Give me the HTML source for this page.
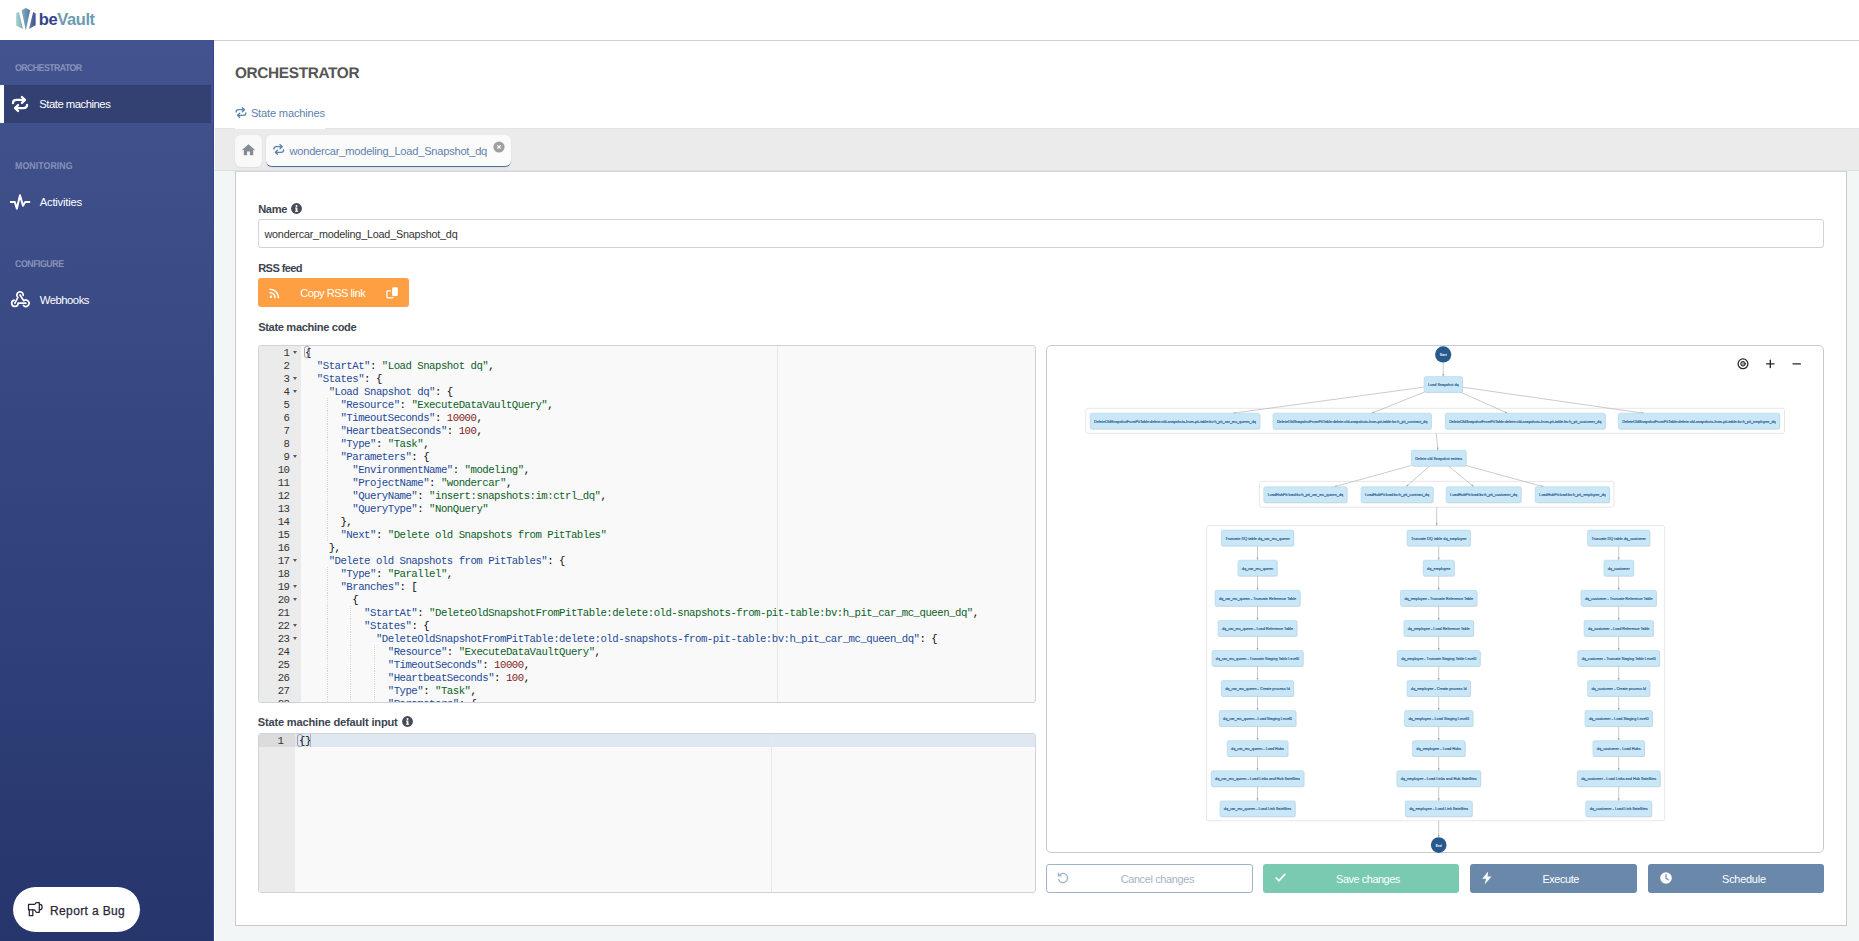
<!DOCTYPE html>
<html lang="en">
<head>
<meta charset="utf-8">
<title>beVault - Orchestrator</title>
<style>
*{box-sizing:border-box;margin:0;padding:0}
html,body{width:1859px;height:941px;overflow:hidden;background:#f3f6f7}
body{position:relative;font-family:"Liberation Sans",sans-serif;font-size:11.3px;color:#333;-webkit-font-smoothing:antialiased}
.abs{position:absolute}
.t{position:absolute;white-space:pre;line-height:1}
#topbar{left:0;top:0;width:1859px;height:41px;background:#fff;border-bottom:1px solid #d2d2d2}
#sidebar{left:0;top:40px;width:214px;height:901px;border-right:1px solid #34488b;background:linear-gradient(180deg,#42538f 0%,#26366c 100%)}
.sec{color:#8d98bd;font-weight:700;font-size:10px}
.nav{color:#fff}
#active{left:0;top:45px;width:211px;height:38px;background:#324072;border-left:4px solid #fff}
#whitehead{left:214px;top:41px;width:1645px;height:87px;background:#fff}
#tabbar{left:214px;top:128px;width:1645px;height:43px;background:#ebebeb;border-top:1px solid #e1e4e8;border-bottom:1px solid #dcdfe3}
#card{left:235px;top:171px;width:1612px;height:755px;background:#fff;border:1px solid #c9c9c9;border-top:1px solid #d6d6d6}
.lbl{font-weight:700;color:#343a40}
.btn{position:absolute;border-radius:3px;height:29px;top:864px}
.btn .t{color:#fff}
.ed{position:absolute;background:#f9f9f9;border:1px solid #cfd4da;border-radius:3px;overflow:hidden;font-family:"Liberation Mono",monospace;font-size:10.7px;letter-spacing:-0.505px;color:#080808}
.ed .gut{position:absolute;left:0;top:0;bottom:0;background:#ebebeb}
.ed .pm{position:absolute;top:0;bottom:0;width:1px;background:#e8e8e8}
.ln{position:absolute;left:0;height:13px;line-height:13px;text-align:right;color:#333;white-space:pre}
.cl{position:absolute;height:13px;line-height:13px;white-space:pre}
.k{color:#234a97}.s{color:#0b6125}.n{color:#811f24}
.ig{position:absolute;width:1px;height:13px;background:repeating-linear-gradient(180deg,#e0d9ca 0 1px,transparent 1px 2px)}
.fa{position:absolute;width:0;height:0;border-left:2.2px solid transparent;border-right:2.2px solid transparent;border-top:3px solid #5a5a5a}
</style>
</head>
<body>

<div id="topbar" class="abs"></div>
<svg class="abs" style="left:15px;top:7px" width="23" height="25" viewBox="0 0 23 25">
<defs><linearGradient id="lg" gradientUnits="userSpaceOnUse" x1="1" y1="0" x2="21" y2="0"><stop offset="0" stop-color="#a6d8cb"/><stop offset="0.5" stop-color="#6a93b2"/><stop offset="1" stop-color="#3b4f92"/></linearGradient></defs>
<path d="M1.1 6.2 L4.0 4.9 L7.9 22.0 L1.1 18.5 Z" fill="url(#lg)"/>
<path d="M6.6 3.3 L10.8 1.1 L15.2 3.3 L10.8 23.3 Z" fill="url(#lg)"/>
<path d="M18.2 4.9 L20.6 6.6 L20.6 18.2 L14.0 22.0 Z" fill="url(#lg)"/>
</svg>
<div id="sidebar" class="abs">
 <div id="active" class="abs"></div>
</div>
<div id="whitehead" class="abs"></div>
<div id="tabbar" class="abs"></div>
<div class="abs" style="left:214px;top:41px;width:1px;height:900px;background:rgba(255,255,255,.75)"></div>
<div class="abs" style="left:235px;top:127px;width:90px;height:2px;background:#fff"></div>
<div id="card" class="abs"></div>
<!-- sidebar icons -->
<svg class="abs" style="left:12px;top:96px" width="16" height="16" viewBox="0 0 16 16" overflow="visible" fill="none" stroke="#fff" stroke-width="2.25" stroke-linecap="round" stroke-linejoin="round">
<path d="M0.9 7.2 C0.9 5 2.4 3.9 4.6 3.9 H12.6 M9.9 0.95 L13 3.9 L9.9 6.85"/>
<path d="M15.1 8.8 C15.1 11 13.6 12.1 11.4 12.1 H3.4 M6.1 9.15 L3 12.1 L6.1 15.05"/>
</svg>
<svg class="abs" style="left:10px;top:193px" width="21" height="18" viewBox="0 0 21 18" fill="none" stroke="#fff" stroke-width="2" stroke-linecap="butt" stroke-linejoin="round">
<path d="M-0.2 9 H4.8 L6.9 15.6 L10 2.2 L13 12.7 L15.2 9 H20.2"/>
</svg>
<svg class="abs" style="left:9px;top:289px" width="22" height="20" viewBox="9 289 22 20" fill="none" stroke="#fff" stroke-width="1.7" stroke-linecap="round" stroke-linejoin="round">
<path d="M23.19 295.28 A3.2 3.2 0 1 0 17.82 297.34 L14.9 303.2"/>
<path d="M14.07 300.11 A3.2 3.2 0 1 0 18.1 303.2 H25.8"/>
<path d="M20 295 L23.7 300.78 A3.2 3.2 0 1 1 23.46 305.38"/>
</svg>
<!-- report a bug -->
<div class="abs" style="left:13px;top:887px;width:127px;height:45px;border-radius:23px;background:#fff"></div>
<svg class="abs" style="left:27px;top:901px" width="16" height="16" viewBox="0 0 16 16" fill="none" stroke="#2b2536" stroke-width="1.25" stroke-linejoin="round" stroke-linecap="round">
<path d="M1.5 3.4 H7.4 C8.2 3.4 8.6 1.5 9.6 1.5 H12.3 V11.3 H9.6 C8.6 11.3 8.2 8.9 7.4 8.9 H1.5 Z"/><path d="M2.3 8.9 V14.7 H5.8 V8.9"/><path d="M12.9 3.3 A2.2 2.75 0 0 1 12.9 8.8"/>
</svg>
<!-- breadcrumb icon -->
<svg class="abs" style="left:234.8px;top:106.9px" width="12" height="11" viewBox="0 0 16 16" fill="none" stroke="#5b82ae" stroke-width="2" stroke-linecap="round" stroke-linejoin="round">
<path d="M0.9 7.2 C0.9 5 2.4 3.9 4.6 3.9 H12.6 M9.9 0.95 L13 3.9 L9.9 6.85"/>
<path d="M15.1 8.8 C15.1 11 13.6 12.1 11.4 12.1 H3.4 M6.1 9.15 L3 12.1 L6.1 15.05"/>
</svg>
<!-- tabs -->
<div class="abs" style="left:235px;top:135px;width:27px;height:32px;border-radius:6px;background:#f9f9f9;box-shadow:0 1px 2px rgba(0,0,0,.07)"></div>
<svg class="abs" style="left:241.9px;top:144px" width="13" height="11.5" viewBox="0 0 13 11.5"><path d="M6.5 0.3 L12.8 5.7 L12.1 6.5 L11.2 5.8 V11.2 H7.9 V7.4 H5.1 V11.2 H1.8 V5.8 L0.9 6.5 L0.2 5.7 Z" fill="#838b94"/></svg>
<div class="abs" style="left:266px;top:135px;width:245px;height:32px;border-radius:6px;background:#fbfbfb;border-bottom:1.5px solid #4c6e9e;box-shadow:0 1px 2px rgba(0,0,0,.08)"></div>
<svg class="abs" style="left:273.3px;top:144px" width="11.5" height="11" viewBox="0 0 16 16" fill="none" stroke="#5b82ae" stroke-width="2" stroke-linecap="round" stroke-linejoin="round">
<path d="M0.9 7.2 C0.9 5 2.4 3.9 4.6 3.9 H12.6 M9.9 0.95 L13 3.9 L9.9 6.85"/>
<path d="M15.1 8.8 C15.1 11 13.6 12.1 11.4 12.1 H3.4 M6.1 9.15 L3 12.1 L6.1 15.05"/>
</svg>
<svg class="abs" style="left:493px;top:140.7px" width="12" height="12" viewBox="0 0 12 12"><circle cx="6" cy="6" r="5.6" fill="#a0a0a0"/><path d="M4.3 4.3 L7.7 7.7 M7.7 4.3 L4.3 7.7" stroke="#fff" stroke-width="1.15" stroke-linecap="butt"/></svg>

<!-- info icons -->
<svg class="abs" style="left:291px;top:203px" width="11" height="11" viewBox="0 0 11 11"><circle cx="5.5" cy="5.5" r="5.4" fill="#454c55"/><rect x="4.7" y="4.6" width="1.7" height="3.8" fill="#fff"/><rect x="4.1" y="4.6" width="1.4" height="1" fill="#fff"/><rect x="4" y="7.7" width="3.1" height="1" fill="#fff"/><circle cx="5.5" cy="2.9" r="1" fill="#fff"/></svg>
<svg class="abs" style="left:401.5px;top:716.3px" width="11" height="11" viewBox="0 0 11 11"><circle cx="5.5" cy="5.5" r="5.4" fill="#454c55"/><rect x="4.7" y="4.6" width="1.7" height="3.8" fill="#fff"/><rect x="4.1" y="4.6" width="1.4" height="1" fill="#fff"/><rect x="4" y="7.7" width="3.1" height="1" fill="#fff"/><circle cx="5.5" cy="2.9" r="1" fill="#fff"/></svg>
<!-- name input -->
<div class="abs" style="left:258px;top:219px;width:1566px;height:29px;border:1px solid #ced4da;border-radius:3px;background:#fff"></div>
<!-- rss button -->
<div class="abs" style="left:258px;top:278px;width:151px;height:29px;border-radius:3px;background:#ff9f43"></div>
<svg class="abs" style="left:268.8px;top:288.1px" width="10.9" height="10.9" viewBox="0 0 12 12" fill="none" stroke="#fff" stroke-width="1.8" stroke-linecap="round"><circle cx="2.2" cy="9.7" r="1.4" fill="#fff" stroke="none"/><path d="M1.2 5.2 A5.4 5.4 0 0 1 6.6 10.6"/><path d="M1.2 1.4 A9.2 9.2 0 0 1 10.4 10.6"/></svg>
<svg class="abs" style="left:386px;top:287px" width="13" height="12" viewBox="0 0 13 12"><rect x="6.1" y="0.3" width="5.7" height="8.7" rx="1.3" fill="#fff"/><path d="M5 3.9 H1.7 Q0.9 3.9 0.9 4.7 V10.1 Q0.9 10.9 1.7 10.9 H6.4 Q7.2 10.9 7.2 10.1 V9.7" fill="none" stroke="#fff" stroke-width="1.25"/></svg>
<!-- bottom buttons -->
<div class="btn" style="left:1046px;width:207px;background:#fff;border:1px solid #9fb4cb"></div>
<svg class="abs" style="left:1057px;top:871.5px" width="12" height="12" viewBox="0 0 12 12" fill="none" stroke="#9db0c6" stroke-width="1.25" stroke-linecap="round" stroke-linejoin="round"><path d="M2.2 3.4 A4.6 4.6 0 1 1 1.6 7.4"/><path d="M1.4 1 V3.8 H4.2"/></svg>
<div class="btn" style="left:1263px;width:196px;background:#79cab0"></div>
<svg class="abs" style="left:1274.5px;top:873px" width="11" height="9.5" viewBox="0 0 11 9.5" fill="none" stroke="#fff" stroke-width="1.7" stroke-linecap="round" stroke-linejoin="round"><path d="M1.2 5 L4 7.8 L9.8 1.4"/></svg>
<div class="btn" style="left:1470px;width:167px;background:#6a89aa"></div>
<svg class="abs" style="left:1480.8px;top:871.2px" width="12" height="13.8" viewBox="0 0 11 13"><path d="M6.6 0.4 L1 7.2 H4.6 L3.4 12.6 L9.8 5.2 H6 Z" fill="#fff"/></svg>
<div class="btn" style="left:1648px;width:176px;background:#6a89aa"></div>
<svg class="abs" style="left:1659.5px;top:872px" width="12" height="12" viewBox="0 0 12 12"><circle cx="6" cy="6" r="5.8" fill="#fff"/><path d="M6 2.6 V6.2 L8.2 7.8" fill="none" stroke="#6a89aa" stroke-width="1.2" stroke-linecap="round"/></svg>
<!-- graph panel -->
<div class="abs" style="left:1046px;top:345px;width:778px;height:508px;border:1px solid #cbcbcb;border-radius:5px;background:#fff"></div>

<div id="t_sec1" class="t" style="left:14.67px;top:63.00px;font-size:9.8px;font-weight:700;color:#8792ba;letter-spacing:-0.650px;transform:scale(0.9,1) rotate(0.03deg);transform-origin:0 0;">ORCHESTRATOR</div>
<div id="t_nav1" class="t" style="left:39.22px;top:99.00px;font-size:11.3px;font-weight:400;color:#fff;letter-spacing:-0.483px;">State machines</div>
<div id="t_sec2" class="t" style="left:14.53px;top:161.00px;font-size:9.8px;font-weight:700;color:#8792ba;letter-spacing:0.056px;transform:scale(0.9,1) rotate(0.03deg);transform-origin:0 0;">MONITORING</div>
<div id="t_nav2" class="t" style="left:39.68px;top:197.00px;font-size:11.3px;font-weight:400;color:#fff;letter-spacing:-0.236px;">Activities</div>
<div id="t_sec3" class="t" style="left:14.71px;top:259.00px;font-size:9.8px;font-weight:700;color:#8792ba;letter-spacing:-0.539px;transform:scale(0.9,1) rotate(0.03deg);transform-origin:0 0;">CONFIGURE</div>
<div id="t_nav3" class="t" style="left:39.76px;top:295.00px;font-size:11.3px;font-weight:400;color:#fff;letter-spacing:-0.496px;">Webhooks</div>
<div id="t_bug" class="t" style="left:50.06px;top:905.00px;font-size:12px;font-weight:400;color:#2b2536;letter-spacing:0.363px;-webkit-text-stroke:0.25px #2b2536;">Report a Bug</div>
<div id="t_title" class="t" style="left:235.20px;top:65.00px;font-size:15.4px;font-weight:700;color:#555;letter-spacing:-0.366px;transform:rotate(0.03deg);transform-origin:0 0;">ORCHESTRATOR</div>
<div id="t_crumb" class="t" style="left:250.90px;top:108.00px;font-size:11.1px;font-weight:400;color:#5b82ae;letter-spacing:-0.168px;">State machines</div>
<div id="t_tab" class="t" style="left:289.49px;top:146.00px;font-size:11.1px;font-weight:400;color:#5b82ae;letter-spacing:-0.223px;">wondercar_modeling_Load_Snapshot_dq</div>
<div id="t_name" class="t" style="left:258.19px;top:204.00px;font-size:11.1px;font-weight:700;color:#3d4550;letter-spacing:-0.359px;">Name</div>
<div id="t_inp" class="t" style="left:264.45px;top:229.00px;font-size:10.8px;font-weight:400;color:#333;letter-spacing:-0.196px;">wondercar_modeling_Load_Snapshot_dq</div>
<div id="t_rss" class="t" style="left:258.19px;top:263.00px;font-size:11.1px;font-weight:700;color:#3d4550;letter-spacing:-0.607px;">RSS feed</div>
<div id="t_copy" class="t" style="left:300.22px;top:288.00px;font-size:11.1px;font-weight:400;color:#fff;letter-spacing:-0.499px;">Copy RSS link</div>
<div id="t_smc" class="t" style="left:258.15px;top:322.00px;font-size:11.1px;font-weight:700;color:#3d4550;letter-spacing:-0.332px;">State machine code</div>
<div id="t_smd" class="t" style="left:257.78px;top:717.00px;font-size:11.1px;font-weight:700;color:#3d4550;letter-spacing:-0.187px;">State machine default input</div>
<div id="t_cancel" class="t" style="left:1120.64px;top:874.00px;font-size:10.9px;font-weight:400;color:#a3b4c8;letter-spacing:-0.333px;">Cancel changes</div>
<div id="t_save" class="t" style="left:1336.07px;top:874.00px;font-size:10.9px;font-weight:400;color:#fff;letter-spacing:-0.434px;">Save changes</div>
<div id="t_exec" class="t" style="left:1542.44px;top:874.00px;font-size:10.9px;font-weight:400;color:#fff;letter-spacing:-0.400px;">Execute</div>
<div id="t_sched" class="t" style="left:1722.11px;top:874.00px;font-size:10.9px;font-weight:400;color:#fff;letter-spacing:-0.223px;">Schedule</div>
<div id="t_logo" class="t" style="left:38.78px;top:11.00px;font-size:16.5px;font-weight:700;color:#6d9bb0;letter-spacing:-0.394px;"><span style="color:#2f4389">be</span>Vault</div>
<div id="ed1" class="ed" style="left:258px;top:345px;width:778px;height:358px">
<div class="gut" style="width:42px"></div>
<div class="pm" style="left:518.2px"></div>
<div class="ln" style="top:0.9px;width:30.5px">1</div>
<div class="fa" style="left:33.8px;top:4.8px"></div>
<div class="cl" style="left:46px;top:0.9px">{</div>
<div class="ln" style="top:13.9px;width:30.5px">2</div>
<div class="cl" style="left:46px;top:13.9px">  <span class="k">"StartAt"</span>: <span class="s">"Load Snapshot dq"</span>,</div>
<div class="ln" style="top:26.9px;width:30.5px">3</div>
<div class="fa" style="left:33.8px;top:30.8px"></div>
<div class="cl" style="left:46px;top:26.9px">  <span class="k">"States"</span>: {</div>
<div class="ln" style="top:39.9px;width:30.5px">4</div>
<div class="fa" style="left:33.8px;top:43.8px"></div>
<div class="cl" style="left:46px;top:39.9px">    <span class="k">"Load Snapshot dq"</span>: {</div>
<div class="ln" style="top:52.9px;width:30.5px">5</div>
<div class="ig" style="left:67.5px;top:52px"></div>
<div class="cl" style="left:46px;top:52.9px">      <span class="k">"Resource"</span>: <span class="s">"ExecuteDataVaultQuery"</span>,</div>
<div class="ln" style="top:65.9px;width:30.5px">6</div>
<div class="ig" style="left:67.5px;top:65px"></div>
<div class="cl" style="left:46px;top:65.9px">      <span class="k">"TimeoutSeconds"</span>: <span class="n">10000</span>,</div>
<div class="ln" style="top:78.9px;width:30.5px">7</div>
<div class="ig" style="left:67.5px;top:78px"></div>
<div class="cl" style="left:46px;top:78.9px">      <span class="k">"HeartbeatSeconds"</span>: <span class="n">100</span>,</div>
<div class="ln" style="top:91.9px;width:30.5px">8</div>
<div class="ig" style="left:67.5px;top:91px"></div>
<div class="cl" style="left:46px;top:91.9px">      <span class="k">"Type"</span>: <span class="s">"Task"</span>,</div>
<div class="ln" style="top:104.9px;width:30.5px">9</div>
<div class="fa" style="left:33.8px;top:108.8px"></div>
<div class="ig" style="left:67.5px;top:104px"></div>
<div class="cl" style="left:46px;top:104.9px">      <span class="k">"Parameters"</span>: {</div>
<div class="ln" style="top:117.9px;width:30.5px">10</div>
<div class="ig" style="left:67.5px;top:117px"></div>
<div class="cl" style="left:46px;top:117.9px">        <span class="k">"EnvironmentName"</span>: <span class="s">"modeling"</span>,</div>
<div class="ln" style="top:130.9px;width:30.5px">11</div>
<div class="ig" style="left:67.5px;top:130px"></div>
<div class="cl" style="left:46px;top:130.9px">        <span class="k">"ProjectName"</span>: <span class="s">"wondercar"</span>,</div>
<div class="ln" style="top:143.9px;width:30.5px">12</div>
<div class="ig" style="left:67.5px;top:143px"></div>
<div class="cl" style="left:46px;top:143.9px">        <span class="k">"QueryName"</span>: <span class="s">"insert:snapshots:im:ctrl_dq"</span>,</div>
<div class="ln" style="top:156.9px;width:30.5px">13</div>
<div class="ig" style="left:67.5px;top:156px"></div>
<div class="cl" style="left:46px;top:156.9px">        <span class="k">"QueryType"</span>: <span class="s">"NonQuery"</span></div>
<div class="ln" style="top:169.9px;width:30.5px">14</div>
<div class="ig" style="left:67.5px;top:169px"></div>
<div class="cl" style="left:46px;top:169.9px">      },</div>
<div class="ln" style="top:182.9px;width:30.5px">15</div>
<div class="ig" style="left:67.5px;top:182px"></div>
<div class="cl" style="left:46px;top:182.9px">      <span class="k">"Next"</span>: <span class="s">"Delete old Snapshots from PitTables"</span></div>
<div class="ln" style="top:195.9px;width:30.5px">16</div>
<div class="cl" style="left:46px;top:195.9px">    },</div>
<div class="ln" style="top:208.9px;width:30.5px">17</div>
<div class="fa" style="left:33.8px;top:212.8px"></div>
<div class="cl" style="left:46px;top:208.9px">    <span class="k">"Delete old Snapshots from PitTables"</span>: {</div>
<div class="ln" style="top:221.9px;width:30.5px">18</div>
<div class="ig" style="left:67.5px;top:221px"></div>
<div class="cl" style="left:46px;top:221.9px">      <span class="k">"Type"</span>: <span class="s">"Parallel"</span>,</div>
<div class="ln" style="top:234.9px;width:30.5px">19</div>
<div class="fa" style="left:33.8px;top:238.8px"></div>
<div class="ig" style="left:67.5px;top:234px"></div>
<div class="cl" style="left:46px;top:234.9px">      <span class="k">"Branches"</span>: [</div>
<div class="ln" style="top:247.9px;width:30.5px">20</div>
<div class="fa" style="left:33.8px;top:251.8px"></div>
<div class="ig" style="left:67.5px;top:247px"></div>
<div class="cl" style="left:46px;top:247.9px">        {</div>
<div class="ln" style="top:260.9px;width:30.5px">21</div>
<div class="ig" style="left:67.5px;top:260px"></div>
<div class="ig" style="left:91.1px;top:260px"></div>
<div class="cl" style="left:46px;top:260.9px">          <span class="k">"StartAt"</span>: <span class="s">"DeleteOldSnapshotFromPitTable:delete:old-snapshots-from-pit-table:bv:h_pit_car_mc_queen_dq"</span>,</div>
<div class="ln" style="top:273.9px;width:30.5px">22</div>
<div class="fa" style="left:33.8px;top:277.8px"></div>
<div class="ig" style="left:67.5px;top:273px"></div>
<div class="ig" style="left:91.1px;top:273px"></div>
<div class="cl" style="left:46px;top:273.9px">          <span class="k">"States"</span>: {</div>
<div class="ln" style="top:286.9px;width:30.5px">23</div>
<div class="fa" style="left:33.8px;top:290.8px"></div>
<div class="ig" style="left:67.5px;top:286px"></div>
<div class="ig" style="left:91.1px;top:286px"></div>
<div class="cl" style="left:46px;top:286.9px">            <span class="k">"DeleteOldSnapshotFromPitTable:delete:old-snapshots-from-pit-table:bv:h_pit_car_mc_queen_dq"</span>: {</div>
<div class="ln" style="top:299.9px;width:30.5px">24</div>
<div class="ig" style="left:67.5px;top:299px"></div>
<div class="ig" style="left:91.1px;top:299px"></div>
<div class="ig" style="left:114.8px;top:299px"></div>
<div class="cl" style="left:46px;top:299.9px">              <span class="k">"Resource"</span>: <span class="s">"ExecuteDataVaultQuery"</span>,</div>
<div class="ln" style="top:312.9px;width:30.5px">25</div>
<div class="ig" style="left:67.5px;top:312px"></div>
<div class="ig" style="left:91.1px;top:312px"></div>
<div class="ig" style="left:114.8px;top:312px"></div>
<div class="cl" style="left:46px;top:312.9px">              <span class="k">"TimeoutSeconds"</span>: <span class="n">10000</span>,</div>
<div class="ln" style="top:325.9px;width:30.5px">26</div>
<div class="ig" style="left:67.5px;top:325px"></div>
<div class="ig" style="left:91.1px;top:325px"></div>
<div class="ig" style="left:114.8px;top:325px"></div>
<div class="cl" style="left:46px;top:325.9px">              <span class="k">"HeartbeatSeconds"</span>: <span class="n">100</span>,</div>
<div class="ln" style="top:338.9px;width:30.5px">27</div>
<div class="ig" style="left:67.5px;top:338px"></div>
<div class="ig" style="left:91.1px;top:338px"></div>
<div class="ig" style="left:114.8px;top:338px"></div>
<div class="cl" style="left:46px;top:338.9px">              <span class="k">"Type"</span>: <span class="s">"Task"</span>,</div>
<div class="ln" style="top:351.9px;width:30.5px">28</div>
<div class="fa" style="left:33.8px;top:355.8px"></div>
<div class="ig" style="left:67.5px;top:351px"></div>
<div class="ig" style="left:91.1px;top:351px"></div>
<div class="ig" style="left:114.8px;top:351px"></div>
<div class="cl" style="left:46px;top:351.9px">              <span class="k">"Parameters"</span>: {</div>
</div>
<div id="ed2" class="ed" style="left:258px;top:733px;width:778px;height:160px">
<div class="abs" style="left:0;top:0px;width:100%;height:13px;background:#dfe7f1"></div>
<div class="gut" style="width:36px"></div>
<div class="abs" style="left:0;top:0px;width:36px;height:13px;background:#dcdcdc"></div>
<div class="pm" style="left:512.2px"></div>
<div class="ln" style="top:0.9px;width:24.5px">1</div>
<div class="cl" style="left:40px;top:0.9px">{}</div>
</div>
<div class="abs" style="left:304px;top:345.5px;width:6.3px;height:12.6px;border:1px solid rgba(75,75,126,.5);border-radius:2.5px"></div>
<div class="abs" style="left:297px;top:733.6px;width:6.3px;height:13.2px;border:1px solid rgba(75,75,126,.5);border-radius:2.5px"></div>
<div class="abs" style="left:310px;top:734px;width:1.4px;height:13px;background:#aab2bf"></div>
<svg class="abs" style="left:1047px;top:346px" width="776" height="508" viewBox="1047 346 776 508" font-family="Liberation Sans, sans-serif">
<rect x="1085.8" y="408.3" width="698.7" height="25.1" rx="2.2" fill="#fff" stroke="#e4e4e4" stroke-width="0.9"/>
<rect x="1259.4" y="481.4" width="354.6" height="25.8" rx="2.2" fill="#fff" stroke="#e4e4e4" stroke-width="0.9"/>
<rect x="1206.6" y="525.7" width="458.1" height="295.1" rx="2.2" fill="#fff" stroke="#e4e4e4" stroke-width="0.9"/>
<path d="M1443.2 362.5L1443.3 376.6" stroke="#b4b4b4" stroke-width="0.7" fill="none"/>
<path d="M1443.3 376.6L1442.3 374.0L1444.3 374.0Z" fill="#a8a8a8"/>
<path d="M1424.1 387.1L1233.0 413.2" stroke="#b4b4b4" stroke-width="0.7" fill="none"/>
<path d="M1233.0 413.2L1235.4 411.8L1235.7 413.8Z" fill="#a8a8a8"/>
<path d="M1424.1 392.2L1371.8 413.2" stroke="#b4b4b4" stroke-width="0.7" fill="none"/>
<path d="M1371.8 413.2L1373.9 411.3L1374.6 413.1Z" fill="#a8a8a8"/>
<path d="M1461.0 392.4L1507.5 413.2" stroke="#b4b4b4" stroke-width="0.7" fill="none"/>
<path d="M1507.5 413.2L1504.8 413.0L1505.6 411.2Z" fill="#a8a8a8"/>
<path d="M1462.5 387.2L1643.7 413.2" stroke="#b4b4b4" stroke-width="0.7" fill="none"/>
<path d="M1643.7 413.2L1641.0 413.8L1641.3 411.8Z" fill="#a8a8a8"/>
<path d="M1436.3 433.4L1437.9 450.2" stroke="#b4b4b4" stroke-width="0.7" fill="none"/>
<path d="M1437.9 450.2L1436.7 447.7L1438.7 447.5Z" fill="#a8a8a8"/>
<path d="M1411.4 465.5L1334.2 486.8" stroke="#b4b4b4" stroke-width="0.7" fill="none"/>
<path d="M1334.2 486.8L1336.4 485.1L1336.9 487.0Z" fill="#a8a8a8"/>
<path d="M1429.7 465.9L1406.0 486.8" stroke="#b4b4b4" stroke-width="0.7" fill="none"/>
<path d="M1406.0 486.8L1407.3 484.3L1408.7 485.8Z" fill="#a8a8a8"/>
<path d="M1448.4 465.9L1473.9 486.8" stroke="#b4b4b4" stroke-width="0.7" fill="none"/>
<path d="M1473.9 486.8L1471.3 485.9L1472.5 484.3Z" fill="#a8a8a8"/>
<path d="M1466.0 465.5L1543.5 486.8" stroke="#b4b4b4" stroke-width="0.7" fill="none"/>
<path d="M1543.5 486.8L1540.8 487.0L1541.3 485.1Z" fill="#a8a8a8"/>
<path d="M1436.7 507.2L1436.7 525.7" stroke="#b4b4b4" stroke-width="0.7" fill="none"/>
<path d="M1436.7 525.7L1435.7 523.1L1437.7 523.1Z" fill="#a8a8a8"/>
<path d="M1257.5 545.9L1257.5 560.2" stroke="#b4b4b4" stroke-width="0.7" fill="none"/>
<path d="M1257.5 560.2L1256.5 557.6L1258.5 557.6Z" fill="#a8a8a8"/>
<path d="M1257.5 576.0L1257.5 590.3" stroke="#b4b4b4" stroke-width="0.7" fill="none"/>
<path d="M1257.5 590.3L1256.5 587.7L1258.5 587.7Z" fill="#a8a8a8"/>
<path d="M1257.5 606.1L1257.5 620.4" stroke="#b4b4b4" stroke-width="0.7" fill="none"/>
<path d="M1257.5 620.4L1256.5 617.8L1258.5 617.8Z" fill="#a8a8a8"/>
<path d="M1257.5 636.2L1257.5 650.5" stroke="#b4b4b4" stroke-width="0.7" fill="none"/>
<path d="M1257.5 650.5L1256.5 647.9L1258.5 647.9Z" fill="#a8a8a8"/>
<path d="M1257.5 666.3L1257.5 680.6" stroke="#b4b4b4" stroke-width="0.7" fill="none"/>
<path d="M1257.5 680.6L1256.5 678.0L1258.5 678.0Z" fill="#a8a8a8"/>
<path d="M1257.5 696.4L1257.5 710.6" stroke="#b4b4b4" stroke-width="0.7" fill="none"/>
<path d="M1257.5 710.6L1256.5 708.0L1258.5 708.0Z" fill="#a8a8a8"/>
<path d="M1257.5 726.4L1257.5 740.7" stroke="#b4b4b4" stroke-width="0.7" fill="none"/>
<path d="M1257.5 740.7L1256.5 738.1L1258.5 738.1Z" fill="#a8a8a8"/>
<path d="M1257.5 756.5L1257.5 770.8" stroke="#b4b4b4" stroke-width="0.7" fill="none"/>
<path d="M1257.5 770.8L1256.5 768.2L1258.5 768.2Z" fill="#a8a8a8"/>
<path d="M1257.5 786.6L1257.5 800.9" stroke="#b4b4b4" stroke-width="0.7" fill="none"/>
<path d="M1257.5 800.9L1256.5 798.3L1258.5 798.3Z" fill="#a8a8a8"/>
<path d="M1438.7 545.9L1438.7 560.2" stroke="#b4b4b4" stroke-width="0.7" fill="none"/>
<path d="M1438.7 560.2L1437.7 557.6L1439.7 557.6Z" fill="#a8a8a8"/>
<path d="M1438.7 576.0L1438.7 590.3" stroke="#b4b4b4" stroke-width="0.7" fill="none"/>
<path d="M1438.7 590.3L1437.7 587.7L1439.7 587.7Z" fill="#a8a8a8"/>
<path d="M1438.7 606.1L1438.7 620.4" stroke="#b4b4b4" stroke-width="0.7" fill="none"/>
<path d="M1438.7 620.4L1437.7 617.8L1439.7 617.8Z" fill="#a8a8a8"/>
<path d="M1438.7 636.2L1438.7 650.5" stroke="#b4b4b4" stroke-width="0.7" fill="none"/>
<path d="M1438.7 650.5L1437.7 647.9L1439.7 647.9Z" fill="#a8a8a8"/>
<path d="M1438.7 666.3L1438.7 680.6" stroke="#b4b4b4" stroke-width="0.7" fill="none"/>
<path d="M1438.7 680.6L1437.7 678.0L1439.7 678.0Z" fill="#a8a8a8"/>
<path d="M1438.7 696.4L1438.7 710.6" stroke="#b4b4b4" stroke-width="0.7" fill="none"/>
<path d="M1438.7 710.6L1437.7 708.0L1439.7 708.0Z" fill="#a8a8a8"/>
<path d="M1438.7 726.4L1438.7 740.7" stroke="#b4b4b4" stroke-width="0.7" fill="none"/>
<path d="M1438.7 740.7L1437.7 738.1L1439.7 738.1Z" fill="#a8a8a8"/>
<path d="M1438.7 756.5L1438.7 770.8" stroke="#b4b4b4" stroke-width="0.7" fill="none"/>
<path d="M1438.7 770.8L1437.7 768.2L1439.7 768.2Z" fill="#a8a8a8"/>
<path d="M1438.7 786.6L1438.7 800.9" stroke="#b4b4b4" stroke-width="0.7" fill="none"/>
<path d="M1438.7 800.9L1437.7 798.3L1439.7 798.3Z" fill="#a8a8a8"/>
<path d="M1618.7 545.9L1618.7 560.2" stroke="#b4b4b4" stroke-width="0.7" fill="none"/>
<path d="M1618.7 560.2L1617.7 557.6L1619.7 557.6Z" fill="#a8a8a8"/>
<path d="M1618.7 576.0L1618.7 590.3" stroke="#b4b4b4" stroke-width="0.7" fill="none"/>
<path d="M1618.7 590.3L1617.7 587.7L1619.7 587.7Z" fill="#a8a8a8"/>
<path d="M1618.7 606.1L1618.7 620.4" stroke="#b4b4b4" stroke-width="0.7" fill="none"/>
<path d="M1618.7 620.4L1617.7 617.8L1619.7 617.8Z" fill="#a8a8a8"/>
<path d="M1618.7 636.2L1618.7 650.5" stroke="#b4b4b4" stroke-width="0.7" fill="none"/>
<path d="M1618.7 650.5L1617.7 647.9L1619.7 647.9Z" fill="#a8a8a8"/>
<path d="M1618.7 666.3L1618.7 680.6" stroke="#b4b4b4" stroke-width="0.7" fill="none"/>
<path d="M1618.7 680.6L1617.7 678.0L1619.7 678.0Z" fill="#a8a8a8"/>
<path d="M1618.7 696.4L1618.7 710.6" stroke="#b4b4b4" stroke-width="0.7" fill="none"/>
<path d="M1618.7 710.6L1617.7 708.0L1619.7 708.0Z" fill="#a8a8a8"/>
<path d="M1618.7 726.4L1618.7 740.7" stroke="#b4b4b4" stroke-width="0.7" fill="none"/>
<path d="M1618.7 740.7L1617.7 738.1L1619.7 738.1Z" fill="#a8a8a8"/>
<path d="M1618.7 756.5L1618.7 770.8" stroke="#b4b4b4" stroke-width="0.7" fill="none"/>
<path d="M1618.7 770.8L1617.7 768.2L1619.7 768.2Z" fill="#a8a8a8"/>
<path d="M1618.7 786.6L1618.7 800.9" stroke="#b4b4b4" stroke-width="0.7" fill="none"/>
<path d="M1618.7 800.9L1617.7 798.3L1619.7 798.3Z" fill="#a8a8a8"/>
<path d="M1438.7 820.8L1438.7 837.3" stroke="#b4b4b4" stroke-width="0.7" fill="none"/>
<path d="M1438.7 837.3L1437.7 834.7L1439.7 834.7Z" fill="#a8a8a8"/>
<rect x="1424.6" y="377.2" width="38.4" height="15.8" rx="1.6" fill="#aebfca" opacity="0.55"/>
<rect x="1424.1" y="376.6" width="38.4" height="15.8" rx="1.6" fill="#c9e7f6" stroke="#b4d5e8" stroke-width="0.6"/>
<text x="1443.3" y="386.10" font-size="3.73" fill="#24558a" stroke="#24558a" stroke-width="0.14" text-anchor="middle" textLength="30.6" lengthAdjust="spacingAndGlyphs">Load Snapshot dq</text>
<rect x="1090.7" y="413.8" width="169.6" height="15.8" rx="1.6" fill="#aebfca" opacity="0.55"/>
<rect x="1090.2" y="413.2" width="169.6" height="15.8" rx="1.6" fill="#c9e7f6" stroke="#b4d5e8" stroke-width="0.6"/>
<text x="1175.0" y="422.65" font-size="3.73" fill="#24558a" stroke="#24558a" stroke-width="0.14" text-anchor="middle" textLength="161.8" lengthAdjust="spacingAndGlyphs">DeleteOldSnapshotFromPitTable:delete:old-snapshots-from-pit-table:bv:h_pit_car_mc_queen_dq</text>
<rect x="1273.5" y="413.8" width="158.2" height="15.8" rx="1.6" fill="#aebfca" opacity="0.55"/>
<rect x="1273.0" y="413.2" width="158.2" height="15.8" rx="1.6" fill="#c9e7f6" stroke="#b4d5e8" stroke-width="0.6"/>
<text x="1352.1" y="422.65" font-size="3.73" fill="#24558a" stroke="#24558a" stroke-width="0.14" text-anchor="middle" textLength="150.4" lengthAdjust="spacingAndGlyphs">DeleteOldSnapshotFromPitTable:delete:old-snapshots-from-pit-table:bv:h_pit_contract_dq</text>
<rect x="1445.8" y="413.8" width="159.9" height="15.8" rx="1.6" fill="#aebfca" opacity="0.55"/>
<rect x="1445.3" y="413.2" width="159.9" height="15.8" rx="1.6" fill="#c9e7f6" stroke="#b4d5e8" stroke-width="0.6"/>
<text x="1525.2" y="422.65" font-size="3.73" fill="#24558a" stroke="#24558a" stroke-width="0.14" text-anchor="middle" textLength="152.1" lengthAdjust="spacingAndGlyphs">DeleteOldSnapshotFromPitTable:delete:old-snapshots-from-pit-table:bv:h_pit_customer_dq</text>
<rect x="1618.9" y="413.8" width="161.2" height="15.8" rx="1.6" fill="#aebfca" opacity="0.55"/>
<rect x="1618.4" y="413.2" width="161.2" height="15.8" rx="1.6" fill="#c9e7f6" stroke="#b4d5e8" stroke-width="0.6"/>
<text x="1699.0" y="422.65" font-size="3.73" fill="#24558a" stroke="#24558a" stroke-width="0.14" text-anchor="middle" textLength="153.4" lengthAdjust="spacingAndGlyphs">DeleteOldSnapshotFromPitTable:delete:old-snapshots-from-pit-table:bv:h_pit_employee_dq</text>
<rect x="1411.9" y="450.8" width="54.6" height="15.8" rx="1.6" fill="#aebfca" opacity="0.55"/>
<rect x="1411.4" y="450.2" width="54.6" height="15.8" rx="1.6" fill="#c9e7f6" stroke="#b4d5e8" stroke-width="0.6"/>
<text x="1438.7" y="459.65" font-size="3.73" fill="#24558a" stroke="#24558a" stroke-width="0.14" text-anchor="middle" textLength="46.8" lengthAdjust="spacingAndGlyphs">Delete old Snapshot entries</text>
<rect x="1264.3" y="487.4" width="83.2" height="15.8" rx="1.6" fill="#aebfca" opacity="0.55"/>
<rect x="1263.8" y="486.8" width="83.2" height="15.8" rx="1.6" fill="#c9e7f6" stroke="#b4d5e8" stroke-width="0.6"/>
<text x="1305.4" y="496.25" font-size="3.73" fill="#24558a" stroke="#24558a" stroke-width="0.14" text-anchor="middle" textLength="75.4" lengthAdjust="spacingAndGlyphs">LoadHubPit:load:bv:h_pit_car_mc_queen_dq</text>
<rect x="1361.6" y="487.4" width="71.9" height="15.8" rx="1.6" fill="#aebfca" opacity="0.55"/>
<rect x="1361.1" y="486.8" width="71.9" height="15.8" rx="1.6" fill="#c9e7f6" stroke="#b4d5e8" stroke-width="0.6"/>
<text x="1397.0" y="496.25" font-size="3.73" fill="#24558a" stroke="#24558a" stroke-width="0.14" text-anchor="middle" textLength="64.1" lengthAdjust="spacingAndGlyphs">LoadHubPit:load:bv:h_pit_contract_dq</text>
<rect x="1446.7" y="487.4" width="74.8" height="15.8" rx="1.6" fill="#aebfca" opacity="0.55"/>
<rect x="1446.2" y="486.8" width="74.8" height="15.8" rx="1.6" fill="#c9e7f6" stroke="#b4d5e8" stroke-width="0.6"/>
<text x="1483.6" y="496.25" font-size="3.73" fill="#24558a" stroke="#24558a" stroke-width="0.14" text-anchor="middle" textLength="67.0" lengthAdjust="spacingAndGlyphs">LoadHubPit:load:bv:h_pit_customer_dq</text>
<rect x="1535.7" y="487.4" width="74.4" height="15.8" rx="1.6" fill="#aebfca" opacity="0.55"/>
<rect x="1535.2" y="486.8" width="74.4" height="15.8" rx="1.6" fill="#c9e7f6" stroke="#b4d5e8" stroke-width="0.6"/>
<text x="1572.4" y="496.25" font-size="3.73" fill="#24558a" stroke="#24558a" stroke-width="0.14" text-anchor="middle" textLength="66.6" lengthAdjust="spacingAndGlyphs">LoadHubPit:load:bv:h_pit_employee_dq</text>
<rect x="1221.8" y="530.7" width="72.3" height="15.8" rx="1.6" fill="#aebfca" opacity="0.55"/>
<rect x="1221.3" y="530.1" width="72.3" height="15.8" rx="1.6" fill="#c9e7f6" stroke="#b4d5e8" stroke-width="0.6"/>
<text x="1257.5" y="539.60" font-size="3.73" fill="#24558a" stroke="#24558a" stroke-width="0.14" text-anchor="middle" textLength="64.5" lengthAdjust="spacingAndGlyphs">Truncate DQ table dq_car_mc_queen</text>
<rect x="1238.4" y="560.8" width="39.2" height="15.8" rx="1.6" fill="#aebfca" opacity="0.55"/>
<rect x="1237.9" y="560.2" width="39.2" height="15.8" rx="1.6" fill="#c9e7f6" stroke="#b4d5e8" stroke-width="0.6"/>
<text x="1257.5" y="569.69" font-size="3.73" fill="#24558a" stroke="#24558a" stroke-width="0.14" text-anchor="middle" textLength="31.4" lengthAdjust="spacingAndGlyphs">dq_car_mc_queen</text>
<rect x="1215.5" y="590.9" width="85.0" height="15.8" rx="1.6" fill="#aebfca" opacity="0.55"/>
<rect x="1215.0" y="590.3" width="85.0" height="15.8" rx="1.6" fill="#c9e7f6" stroke="#b4d5e8" stroke-width="0.6"/>
<text x="1257.5" y="599.78" font-size="3.73" fill="#24558a" stroke="#24558a" stroke-width="0.14" text-anchor="middle" textLength="77.2" lengthAdjust="spacingAndGlyphs">dq_car_mc_queen - Truncate Reference Table</text>
<rect x="1218.6" y="621.0" width="78.8" height="15.8" rx="1.6" fill="#aebfca" opacity="0.55"/>
<rect x="1218.1" y="620.4" width="78.8" height="15.8" rx="1.6" fill="#c9e7f6" stroke="#b4d5e8" stroke-width="0.6"/>
<text x="1257.5" y="629.87" font-size="3.73" fill="#24558a" stroke="#24558a" stroke-width="0.14" text-anchor="middle" textLength="71.0" lengthAdjust="spacingAndGlyphs">dq_car_mc_queen - Load Reference Table</text>
<rect x="1212.5" y="651.1" width="91.1" height="15.8" rx="1.6" fill="#aebfca" opacity="0.55"/>
<rect x="1212.0" y="650.5" width="91.1" height="15.8" rx="1.6" fill="#c9e7f6" stroke="#b4d5e8" stroke-width="0.6"/>
<text x="1257.5" y="659.96" font-size="3.73" fill="#24558a" stroke="#24558a" stroke-width="0.14" text-anchor="middle" textLength="83.3" lengthAdjust="spacingAndGlyphs">dq_car_mc_queen - Truncate Staging Table Level0</text>
<rect x="1221.8" y="681.2" width="72.3" height="15.8" rx="1.6" fill="#aebfca" opacity="0.55"/>
<rect x="1221.3" y="680.6" width="72.3" height="15.8" rx="1.6" fill="#c9e7f6" stroke="#b4d5e8" stroke-width="0.6"/>
<text x="1257.5" y="690.05" font-size="3.73" fill="#24558a" stroke="#24558a" stroke-width="0.14" text-anchor="middle" textLength="64.5" lengthAdjust="spacingAndGlyphs">dq_car_mc_queen - Create process Id</text>
<rect x="1219.7" y="711.2" width="76.7" height="15.8" rx="1.6" fill="#aebfca" opacity="0.55"/>
<rect x="1219.2" y="710.6" width="76.7" height="15.8" rx="1.6" fill="#c9e7f6" stroke="#b4d5e8" stroke-width="0.6"/>
<text x="1257.5" y="720.14" font-size="3.73" fill="#24558a" stroke="#24558a" stroke-width="0.14" text-anchor="middle" textLength="68.9" lengthAdjust="spacingAndGlyphs">dq_car_mc_queen - Load Staging Level0</text>
<rect x="1227.7" y="741.3" width="60.7" height="15.8" rx="1.6" fill="#aebfca" opacity="0.55"/>
<rect x="1227.2" y="740.7" width="60.7" height="15.8" rx="1.6" fill="#c9e7f6" stroke="#b4d5e8" stroke-width="0.6"/>
<text x="1257.5" y="750.23" font-size="3.73" fill="#24558a" stroke="#24558a" stroke-width="0.14" text-anchor="middle" textLength="52.9" lengthAdjust="spacingAndGlyphs">dq_car_mc_queen - Load Hubs</text>
<rect x="1211.7" y="771.4" width="92.7" height="15.8" rx="1.6" fill="#aebfca" opacity="0.55"/>
<rect x="1211.2" y="770.8" width="92.7" height="15.8" rx="1.6" fill="#c9e7f6" stroke="#b4d5e8" stroke-width="0.6"/>
<text x="1257.5" y="780.32" font-size="3.73" fill="#24558a" stroke="#24558a" stroke-width="0.14" text-anchor="middle" textLength="84.9" lengthAdjust="spacingAndGlyphs">dq_car_mc_queen - Load Links and Hub Satellites</text>
<rect x="1220.5" y="801.5" width="75.1" height="15.8" rx="1.6" fill="#aebfca" opacity="0.55"/>
<rect x="1220.0" y="800.9" width="75.1" height="15.8" rx="1.6" fill="#c9e7f6" stroke="#b4d5e8" stroke-width="0.6"/>
<text x="1257.5" y="810.41" font-size="3.73" fill="#24558a" stroke="#24558a" stroke-width="0.14" text-anchor="middle" textLength="67.3" lengthAdjust="spacingAndGlyphs">dq_car_mc_queen - Load Link Satellites</text>
<rect x="1407.5" y="530.7" width="63.3" height="15.8" rx="1.6" fill="#aebfca" opacity="0.55"/>
<rect x="1407.0" y="530.1" width="63.3" height="15.8" rx="1.6" fill="#c9e7f6" stroke="#b4d5e8" stroke-width="0.6"/>
<text x="1438.7" y="539.60" font-size="3.73" fill="#24558a" stroke="#24558a" stroke-width="0.14" text-anchor="middle" textLength="55.5" lengthAdjust="spacingAndGlyphs">Truncate DQ table dq_employee</text>
<rect x="1423.7" y="560.8" width="31.0" height="15.8" rx="1.6" fill="#aebfca" opacity="0.55"/>
<rect x="1423.2" y="560.2" width="31.0" height="15.8" rx="1.6" fill="#c9e7f6" stroke="#b4d5e8" stroke-width="0.6"/>
<text x="1438.7" y="569.69" font-size="3.73" fill="#24558a" stroke="#24558a" stroke-width="0.14" text-anchor="middle" textLength="23.2" lengthAdjust="spacingAndGlyphs">dq_employee</text>
<rect x="1401.0" y="590.9" width="76.4" height="15.8" rx="1.6" fill="#aebfca" opacity="0.55"/>
<rect x="1400.5" y="590.3" width="76.4" height="15.8" rx="1.6" fill="#c9e7f6" stroke="#b4d5e8" stroke-width="0.6"/>
<text x="1438.7" y="599.78" font-size="3.73" fill="#24558a" stroke="#24558a" stroke-width="0.14" text-anchor="middle" textLength="68.6" lengthAdjust="spacingAndGlyphs">dq_employee - Truncate Reference Table</text>
<rect x="1404.4" y="621.0" width="69.7" height="15.8" rx="1.6" fill="#aebfca" opacity="0.55"/>
<rect x="1403.9" y="620.4" width="69.7" height="15.8" rx="1.6" fill="#c9e7f6" stroke="#b4d5e8" stroke-width="0.6"/>
<text x="1438.7" y="629.87" font-size="3.73" fill="#24558a" stroke="#24558a" stroke-width="0.14" text-anchor="middle" textLength="61.9" lengthAdjust="spacingAndGlyphs">dq_employee - Load Reference Table</text>
<rect x="1397.8" y="651.1" width="82.9" height="15.8" rx="1.6" fill="#aebfca" opacity="0.55"/>
<rect x="1397.2" y="650.5" width="82.9" height="15.8" rx="1.6" fill="#c9e7f6" stroke="#b4d5e8" stroke-width="0.6"/>
<text x="1438.7" y="659.96" font-size="3.73" fill="#24558a" stroke="#24558a" stroke-width="0.14" text-anchor="middle" textLength="75.1" lengthAdjust="spacingAndGlyphs">dq_employee - Truncate Staging Table Level0</text>
<rect x="1407.5" y="681.2" width="63.5" height="15.8" rx="1.6" fill="#aebfca" opacity="0.55"/>
<rect x="1407.0" y="680.6" width="63.5" height="15.8" rx="1.6" fill="#c9e7f6" stroke="#b4d5e8" stroke-width="0.6"/>
<text x="1438.7" y="690.05" font-size="3.73" fill="#24558a" stroke="#24558a" stroke-width="0.14" text-anchor="middle" textLength="55.7" lengthAdjust="spacingAndGlyphs">dq_employee - Create process Id</text>
<rect x="1405.0" y="711.2" width="68.4" height="15.8" rx="1.6" fill="#aebfca" opacity="0.55"/>
<rect x="1404.5" y="710.6" width="68.4" height="15.8" rx="1.6" fill="#c9e7f6" stroke="#b4d5e8" stroke-width="0.6"/>
<text x="1438.7" y="720.14" font-size="3.73" fill="#24558a" stroke="#24558a" stroke-width="0.14" text-anchor="middle" textLength="60.6" lengthAdjust="spacingAndGlyphs">dq_employee - Load Staging Level0</text>
<rect x="1412.9" y="741.3" width="52.7" height="15.8" rx="1.6" fill="#aebfca" opacity="0.55"/>
<rect x="1412.4" y="740.7" width="52.7" height="15.8" rx="1.6" fill="#c9e7f6" stroke="#b4d5e8" stroke-width="0.6"/>
<text x="1438.7" y="750.23" font-size="3.73" fill="#24558a" stroke="#24558a" stroke-width="0.14" text-anchor="middle" textLength="44.9" lengthAdjust="spacingAndGlyphs">dq_employee - Load Hubs</text>
<rect x="1397.2" y="771.4" width="83.9" height="15.8" rx="1.6" fill="#aebfca" opacity="0.55"/>
<rect x="1396.8" y="770.8" width="83.9" height="15.8" rx="1.6" fill="#c9e7f6" stroke="#b4d5e8" stroke-width="0.6"/>
<text x="1438.7" y="780.32" font-size="3.73" fill="#24558a" stroke="#24558a" stroke-width="0.14" text-anchor="middle" textLength="76.1" lengthAdjust="spacingAndGlyphs">dq_employee - Load Links and Hub Satellites</text>
<rect x="1405.8" y="801.5" width="66.9" height="15.8" rx="1.6" fill="#aebfca" opacity="0.55"/>
<rect x="1405.2" y="800.9" width="66.9" height="15.8" rx="1.6" fill="#c9e7f6" stroke="#b4d5e8" stroke-width="0.6"/>
<text x="1438.7" y="810.41" font-size="3.73" fill="#24558a" stroke="#24558a" stroke-width="0.14" text-anchor="middle" textLength="59.1" lengthAdjust="spacingAndGlyphs">dq_employee - Load Link Satellites</text>
<rect x="1588.1" y="530.7" width="62.2" height="15.8" rx="1.6" fill="#aebfca" opacity="0.55"/>
<rect x="1587.6" y="530.1" width="62.2" height="15.8" rx="1.6" fill="#c9e7f6" stroke="#b4d5e8" stroke-width="0.6"/>
<text x="1618.7" y="539.60" font-size="3.73" fill="#24558a" stroke="#24558a" stroke-width="0.14" text-anchor="middle" textLength="54.4" lengthAdjust="spacingAndGlyphs">Truncate DQ table dq_customer</text>
<rect x="1604.4" y="560.8" width="29.7" height="15.8" rx="1.6" fill="#aebfca" opacity="0.55"/>
<rect x="1603.9" y="560.2" width="29.7" height="15.8" rx="1.6" fill="#c9e7f6" stroke="#b4d5e8" stroke-width="0.6"/>
<text x="1618.7" y="569.69" font-size="3.73" fill="#24558a" stroke="#24558a" stroke-width="0.14" text-anchor="middle" textLength="21.9" lengthAdjust="spacingAndGlyphs">dq_customer</text>
<rect x="1581.5" y="590.9" width="75.4" height="15.8" rx="1.6" fill="#aebfca" opacity="0.55"/>
<rect x="1581.0" y="590.3" width="75.4" height="15.8" rx="1.6" fill="#c9e7f6" stroke="#b4d5e8" stroke-width="0.6"/>
<text x="1618.7" y="599.78" font-size="3.73" fill="#24558a" stroke="#24558a" stroke-width="0.14" text-anchor="middle" textLength="67.6" lengthAdjust="spacingAndGlyphs">dq_customer - Truncate Reference Table</text>
<rect x="1584.6" y="621.0" width="69.2" height="15.8" rx="1.6" fill="#aebfca" opacity="0.55"/>
<rect x="1584.1" y="620.4" width="69.2" height="15.8" rx="1.6" fill="#c9e7f6" stroke="#b4d5e8" stroke-width="0.6"/>
<text x="1618.7" y="629.87" font-size="3.73" fill="#24558a" stroke="#24558a" stroke-width="0.14" text-anchor="middle" textLength="61.4" lengthAdjust="spacingAndGlyphs">dq_customer - Load Reference Table</text>
<rect x="1578.3" y="651.1" width="81.8" height="15.8" rx="1.6" fill="#aebfca" opacity="0.55"/>
<rect x="1577.8" y="650.5" width="81.8" height="15.8" rx="1.6" fill="#c9e7f6" stroke="#b4d5e8" stroke-width="0.6"/>
<text x="1618.7" y="659.96" font-size="3.73" fill="#24558a" stroke="#24558a" stroke-width="0.14" text-anchor="middle" textLength="74.0" lengthAdjust="spacingAndGlyphs">dq_customer - Truncate Staging Table Level0</text>
<rect x="1588.1" y="681.2" width="62.2" height="15.8" rx="1.6" fill="#aebfca" opacity="0.55"/>
<rect x="1587.6" y="680.6" width="62.2" height="15.8" rx="1.6" fill="#c9e7f6" stroke="#b4d5e8" stroke-width="0.6"/>
<text x="1618.7" y="690.05" font-size="3.73" fill="#24558a" stroke="#24558a" stroke-width="0.14" text-anchor="middle" textLength="54.4" lengthAdjust="spacingAndGlyphs">dq_customer - Create process Id</text>
<rect x="1585.5" y="711.2" width="67.4" height="15.8" rx="1.6" fill="#aebfca" opacity="0.55"/>
<rect x="1585.0" y="710.6" width="67.4" height="15.8" rx="1.6" fill="#c9e7f6" stroke="#b4d5e8" stroke-width="0.6"/>
<text x="1618.7" y="720.14" font-size="3.73" fill="#24558a" stroke="#24558a" stroke-width="0.14" text-anchor="middle" textLength="59.6" lengthAdjust="spacingAndGlyphs">dq_customer - Load Staging Level0</text>
<rect x="1593.4" y="741.3" width="51.6" height="15.8" rx="1.6" fill="#aebfca" opacity="0.55"/>
<rect x="1592.9" y="740.7" width="51.6" height="15.8" rx="1.6" fill="#c9e7f6" stroke="#b4d5e8" stroke-width="0.6"/>
<text x="1618.7" y="750.23" font-size="3.73" fill="#24558a" stroke="#24558a" stroke-width="0.14" text-anchor="middle" textLength="43.8" lengthAdjust="spacingAndGlyphs">dq_customer - Load Hubs</text>
<rect x="1577.8" y="771.4" width="82.9" height="15.8" rx="1.6" fill="#aebfca" opacity="0.55"/>
<rect x="1577.2" y="770.8" width="82.9" height="15.8" rx="1.6" fill="#c9e7f6" stroke="#b4d5e8" stroke-width="0.6"/>
<text x="1618.7" y="780.32" font-size="3.73" fill="#24558a" stroke="#24558a" stroke-width="0.14" text-anchor="middle" textLength="75.1" lengthAdjust="spacingAndGlyphs">dq_customer - Load Links and Hub Satellites</text>
<rect x="1586.3" y="801.5" width="65.8" height="15.8" rx="1.6" fill="#aebfca" opacity="0.55"/>
<rect x="1585.8" y="800.9" width="65.8" height="15.8" rx="1.6" fill="#c9e7f6" stroke="#b4d5e8" stroke-width="0.6"/>
<text x="1618.7" y="810.41" font-size="3.73" fill="#24558a" stroke="#24558a" stroke-width="0.14" text-anchor="middle" textLength="58.0" lengthAdjust="spacingAndGlyphs">dq_customer - Load Link Satellites</text>
<circle cx="1443.2" cy="354.4" r="8.1" fill="#275a8c"/>
<text x="1443.2" y="355.8" font-size="3.1" font-weight="700" fill="#fff" text-anchor="middle">Start</text>
<circle cx="1438.7" cy="845.1" r="7.8" fill="#275a8c"/>
<text x="1438.7" y="846.5" font-size="3.1" font-weight="700" fill="#fff" text-anchor="middle">End</text>
</svg>
<svg class="abs" style="left:1735px;top:356px" width="72" height="16" viewBox="0 0 72 16" fill="none" stroke="#23272b" stroke-linecap="round">
<circle cx="8" cy="7.8" r="4.9" stroke-width="1.25"/><circle cx="8" cy="7.8" r="2.3" stroke-width="1" fill="#9aa0a6"/>
<path d="M31.6 7.8 H39 M35.3 4.1 V11.5" stroke-width="1.35"/><path d="M58 7.8 H65.4" stroke-width="1.35"/></svg>
</body>
</html>
